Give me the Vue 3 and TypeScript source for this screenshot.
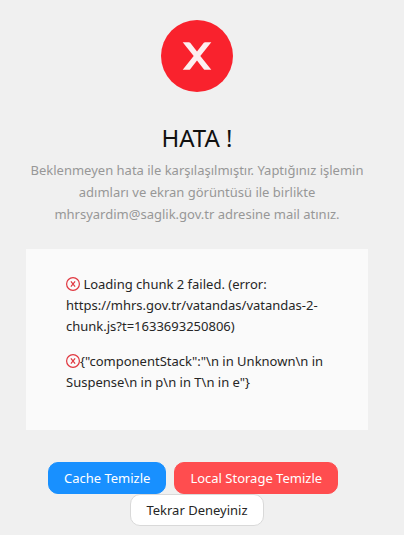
<script setup lang="ts">
import { ref } from 'vue'

const errors = ref<string[]>([
  ' Loading chunk 2 failed. (error: https://mhrs.gov.tr/vatandas/vatandas-2-chunk.js?t=1633693250806)',
  '{"componentStack":"\\n in Unknown\\n in Suspense\\n in p\\n in T\\n in e"}',
])

function clearLocal(): void {
  window.localStorage.clear()
}

function reload(): void {
  window.location.reload()
}

async function clearCache(): Promise<void> {
  const keys = await window.caches.keys()
  await Promise.all(keys.map((key) => window.caches.delete(key)))
}
</script>

<template>
  <main class="result">
    <svg class="status" viewBox="0 0 72 72" aria-hidden="true">
      <circle cx="36" cy="36" r="36" fill="#f9222d" />
      <path d="M21.700 22.200h6.200q.8 0 1.300.6L36 31.600l6.800-8.800q.5-.6 1.300-.6h6.200L39.300 36l11 13.800h-6.200q-.8 0-1.300-.6L36 40.400l-6.800 8.800q-.5.6-1.300.6h-6.200L32.700 36z" fill="#fdeff0" />
    </svg>
    <h1 class="title">HATA !</h1>
    <p class="subtitle">
      Beklenmeyen hata ile karşılaşılmıştır. Yaptığınız işlemin adımları ve ekran görüntüsü ile birlikte
      mhrsyardim@saglik.gov.tr adresine mail atınız.
    </p>
    <section class="details">
      <p v-for="error in errors" :key="error" class="error">
        <svg class="mark" viewBox="0 0 14 14" aria-hidden="true">
          <circle cx="7" cy="7" r="6.400" />
          <path d="M4.900 4.300l4.200 5.400M9.100 4.300L4.900 9.700" />
        </svg><span>{{ error }}</span>
      </p>
    </section>
    <div class="actions">
      <button type="button" class="btn primary" @click="clearCache">Cache Temizle</button>
      <button type="button" class="btn danger" @click="clearLocal">Local Storage Temizle</button>
      <button type="button" class="btn" @click="reload">Tekrar Deneyiniz</button>
    </div>
  </main>
</template>

<style>
body {
  background: #f0f0f0;
}
</style>

<style scoped>
.result {
  padding: 20px 36px 8px 26px;
  font-family: "Noto Sans", "Open Sans", sans-serif;
  font-size: 13px;
  line-height: 22px;
  color: #262626;
}
.status {
  display: block;
  width: 72px;
  height: 72px;
  margin: 0 auto 24px;
}
.title {
  margin: 0;
  font-size: 24px;
  line-height: 43px;
  font-weight: 400;
  text-align: center;
  color: #111;
}
.subtitle {
  margin: 0;
  text-align: center;
  color: #979797;
}
.details {
  margin-top: 24px;
  padding: 25px 40px 23px;
  background: #fafafa;
}
.error {
  margin: 0 0 14px;
  line-height: 21px;
}
.mark {
  width: 14px;
  height: 14px;
  vertical-align: -2px;
  fill: none;
  stroke: #e0363f;
  stroke-width: 1.200;
}
.actions {
  display: flex;
  flex-wrap: wrap;
  justify-content: center;
  margin-top: 32px;
}
.btn {
  height: 32px;
  padding: 0 15px;
  border: 1px solid #d9d9d9;
  border-radius: 10px;
  background: #fff;
  color: #262626;
  font: inherit;
}
.primary,
.danger {
  margin-right: 8px;
  color: #fff;
}
.primary {
  border-color: #1890ff;
  background: #1890ff;
}
.danger {
  border-color: #ff4d4f;
  background: #ff4d4f;
}
</style>
